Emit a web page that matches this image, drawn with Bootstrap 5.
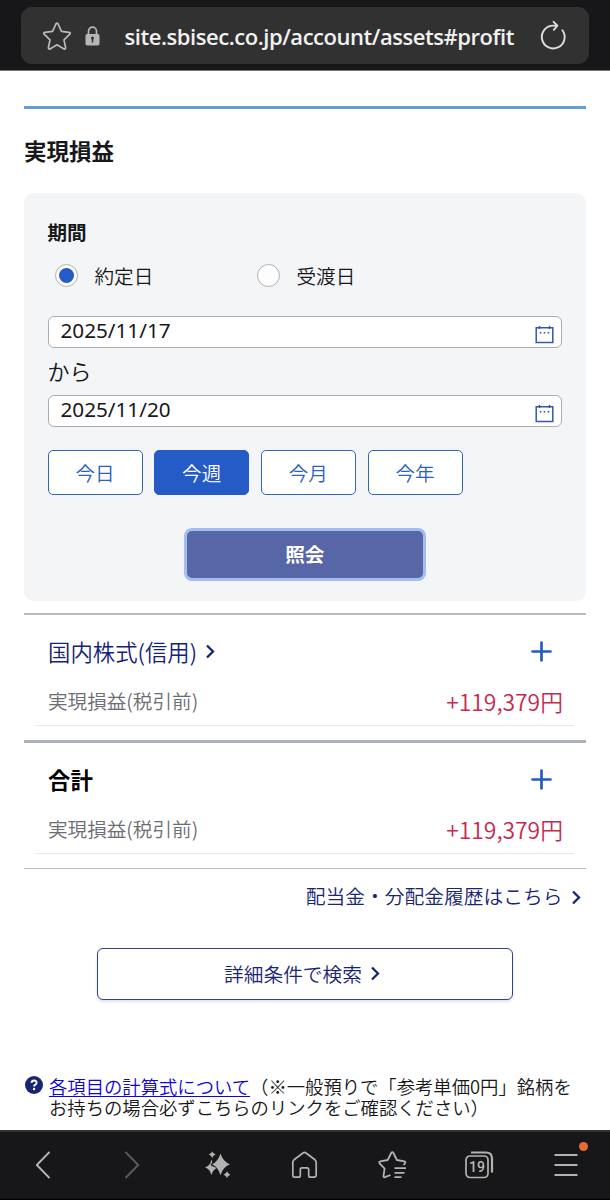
<!DOCTYPE html>
<html lang="ja">
<head>
<meta charset="utf-8">
<meta name="viewport" content="width=device-width, initial-scale=1">
<title>実現損益</title>
<link rel="stylesheet" href="https://cdn.jsdelivr.net/npm/bootstrap@5.3.0/dist/css/bootstrap.min.css">
<style>
body{width:610px;height:1200px;overflow:hidden;background:#fff;color:#17181a;font-family:"Noto Sans CJK JP",sans-serif;font-size:19.6px;font-weight:350;line-height:1}
svg{display:block;flex:none}
.topbar{height:71px;background:#17171a;border-bottom:1px solid #77777a;padding:7px 21px 6px}
.addr{height:57px;background:#313131;border-radius:11px;padding:0 21px 0 20px}
.lock{margin-left:12px}
.url{font:600 22px "Open Sans",sans-serif;letter-spacing:-.45px;color:#f1f1f1;white-space:nowrap;width:390px;margin-left:24.5px}
.page{height:1059px;padding:35px 24px 0}
.rule-top{height:3px;background:#5f9ed6}
.title{font-size:22.5px;font-weight:700;line-height:24px;height:24px;margin:29px 0 31px}
.panel{background:#f4f5f7;border-radius:10px;height:408px;padding:29px 24px 0 23.5px}
.lbl{font-weight:700;height:22px}
.radios{height:24px;margin-top:19px;padding-left:7px}
.dot{width:23px;height:23px;border:1px solid #aeb1b8;border-radius:50%;background:#fdfdfd;display:grid;place-items:center}
.dot.on::after{content:"";width:15px;height:15px;border-radius:50%;background:#255bc7}
.dot-text{margin-left:17px;padding-top:2px}
.field{height:32px;border:1px solid #a9adb6;border-radius:6px;background:#fff;padding:0 7px 0 12px}
.field span{font:20.7px/26px "Noto Sans",sans-serif}
.kara{font-size:22px;height:47px;padding-top:11px}
.quick{margin-top:23px;gap:11.7px}
.quick .btn{width:95px;height:44.5px;padding:2px 0 0;font-size:19.6px;font-weight:350;line-height:1;border:1.5px solid #3565bb;border-radius:5px;color:#2b5fc0;background:#fff}
.quick .btn.active{background:#255bc7;border-color:#255bc7;color:#fff}
.go{width:242px;height:53px;border:3px solid #a3bdf0;border-radius:8px;background:#5766a7;color:#fff;font-size:19.6px;font-weight:700;line-height:1;padding:0;margin-top:33px}
.sec{border-top:2px solid #b8bcc0;height:127px}
.sec.first{margin-top:12px}
.sec.thick{border-top:3px solid #aab0bc;height:128px}
.sec-head{height:77px;padding:0 34px 5px 24px;font-size:22.4px;color:#152377}
.sec-head span{padding-top:1px}
.sec-row{height:34px;margin:0 12px;padding:0 11px 15px 12px;border-bottom:1px solid #e6e8ea;color:#6b6d72}
.amt{color:#c32b50;font-size:22.85px;padding-top:1px}
.chev{margin-left:8px}
.navy{color:#182573}
.hist{border-top:1.5px solid #b4bcc2;height:79.5px;padding:17px 5.5px 0 0;font-size:19.75px}
.detail{width:416px;height:52px;border:1.5px solid #35437f;border-radius:6px;background:#fff;box-shadow:0 2px 3px #dfe3f1;font-size:19.7px;font-weight:350;line-height:1;color:#182573;padding:0 6px 0 0}
.note{margin-top:76px;font-size:18.33px;line-height:21px;white-space:nowrap;padding-left:1px}
.note a{color:#1005d6;text-decoration:underline;text-underline-offset:2px;text-decoration-thickness:1px}
.q{margin-right:6px}
.botbar{height:70px;background:#17171a;border-top:2px solid #333336;border-bottom:1px solid #000}
.botbar>div{flex:1;height:65px;display:grid;place-items:center}
.alert-dot{width:9px;height:9px;background:#e46b32;left:56.5px;top:10px}
</style>
<script src="https://cdn.jsdelivr.net/npm/bootstrap@5.3.0/dist/js/bootstrap.bundle.min.js"></script>
</head>
<body>
<header class="topbar">
  <div class="addr d-flex align-items-center">
    <svg width="32" height="32" viewBox="0 0 32 32" fill="none" stroke="#b9b9b9" stroke-width="1.7" stroke-linejoin="round"><path d="M15 3.8Q16 2.3 17 3.8L20.5 11.3L28.2 12.3Q30 12.8 28.8 14.2L23 19.8L24.6 27.6Q24.7 29.6 23 28.9L16 24.8L9 28.9Q7.3 29.6 7.4 27.6L9 19.8L3.2 14.2Q2 12.8 3.8 12.3L11.5 11.3Z"/></svg>
    <svg class="lock" width="15" height="20" viewBox="0 0 15 20"><path d="M3.5 9V5.2a4 4 0 0 1 8 0V9" fill="none" stroke="#b6b6b6" stroke-width="1.7"/><rect x=".5" y="8" width="14" height="11.5" rx="1.8" fill="#b6b6b6"/><circle cx="7.5" cy="12" r="1.5" fill="#313131"/><path d="M7.5 12v4.5" stroke="#313131" stroke-width="1.5"/></svg>
    <div class="url">site.sbisec.co.jp/account/assets#profit</div>
    <svg class="ms-auto" width="30" height="32" viewBox="0 0 30 32" fill="none" stroke="#dedede" stroke-width="1.9" stroke-linecap="round" stroke-linejoin="round"><path d="M24.4 10.2A11.4 11.4 0 1 1 15.5 5.6H18.8M15.6 1.8L19.4 5.7L15.8 9.8"/></svg>
  </div>
</header>
<main class="page">
  <div class="rule-top"></div>
  <h1 class="title">実現損益</h1>
  <section class="panel">
    <div class="lbl">期間</div>
    <div class="radios d-flex align-items-center">
      <span class="dot on"></span><span class="dot-text" style="width:162px">約定日</span>
      <span class="dot"></span><span class="dot-text">受渡日</span>
    </div>
    <div class="field d-flex justify-content-between" style="margin-top:29px"><span>2025/11/17</span>
      <svg class="mt-2" width="19" height="19" viewBox="0 0 19 19"><path d="M1.2 2.8H17.8V17.5H1.2ZM4.5 1V4M14.5 1V4" fill="none" stroke="#3159af" stroke-width="1.5"/><path d="M4.8 7.8H14.5" stroke="#3159af" stroke-width="1.6" stroke-dasharray="1.6 2.3"/></svg></div>
    <div class="kara">から</div>
    <div class="field d-flex justify-content-between"><span>2025/11/20</span>
      <svg class="mt-2" width="19" height="19" viewBox="0 0 19 19"><path d="M1.2 2.8H17.8V17.5H1.2ZM4.5 1V4M14.5 1V4" fill="none" stroke="#3159af" stroke-width="1.5"/><path d="M4.8 7.8H14.5" stroke="#3159af" stroke-width="1.6" stroke-dasharray="1.6 2.3"/></svg></div>
    <div class="quick d-flex">
      <button class="btn">今日</button><button class="btn active">今週</button><button class="btn">今月</button><button class="btn">今年</button>
    </div>
    <button class="btn go d-block mx-auto">照会</button>
  </section>
  <section class="sec first">
    <div class="sec-head d-flex align-items-center"><span>国内株式(信用)</span>
      <svg class="chev" width="10" height="15" viewBox="0 0 10 15"><path d="M2 1.5L8 7.5L2 13.5" fill="none" stroke="#152377" stroke-width="2.3"/></svg>
      <svg class="ms-auto" width="21" height="21" viewBox="0 0 21 21"><path d="M10.5 1.5V19.5M1.5 10.5H19.5" stroke="#255bbd" stroke-width="2.7" stroke-linecap="round"/></svg></div>
    <div class="sec-row d-flex align-items-center justify-content-between"><span>実現損益(税引前)</span><span class="amt">+119,379円</span></div>
  </section>
  <section class="sec thick">
    <div class="sec-head d-flex align-items-center"><span class="fw-bold text-black">合計</span>
      <svg class="ms-auto" width="21" height="21" viewBox="0 0 21 21"><path d="M10.5 1.5V19.5M1.5 10.5H19.5" stroke="#255bbd" stroke-width="2.7" stroke-linecap="round"/></svg></div>
    <div class="sec-row d-flex align-items-center justify-content-between"><span>実現損益(税引前)</span><span class="amt">+119,379円</span></div>
  </section>
  <div class="hist navy d-flex justify-content-end align-items-start"><span>配当金・分配金履歴はこちら</span>
    <svg class="chev mt-1" width="10" height="15" viewBox="0 0 10 15"><path d="M2 1.5L8 7.5L2 13.5" fill="none" stroke="#182573" stroke-width="2.3"/></svg></div>
  <button class="btn detail d-flex mx-auto justify-content-center align-items-center"><span>詳細条件で検索</span>
    <svg class="chev" width="10" height="15" viewBox="0 0 10 15"><path d="M2 1.5L8 7.5L2 13.5" fill="none" stroke="#182573" stroke-width="2.3"/></svg></button>
  <div class="note d-flex">
    <svg class="q" width="18" height="18" viewBox="0 0 18 18"><circle cx="9" cy="9" r="9" fill="#182573"/><path d="M6.5 6.8Q6.7 4.5 9.1 4.5Q11.7 4.6 11.6 6.8Q11.5 8 10 8.8Q9.1 9.3 9.1 10.4" fill="none" stroke="#fff" stroke-width="1.9"/><circle cx="9.1" cy="13" r="1.2" fill="#fff"/></svg>
    <div><a href="#">各項目の計算式について</a>（※一般預りで「参考単価0円」銘柄を<br>お持ちの場合必ずこちらのリンクをご確認ください）</div>
  </div>
</main>
<nav class="botbar d-flex" aria-label="ブラウザ">
  <div><svg width="16" height="28" viewBox="0 0 16 28"><path d="M13.5 1L.8 14L13.5 27" fill="none" stroke="#b5b5b5" stroke-width="1.8" stroke-linejoin="round"/></svg></div>
  <div><svg width="16" height="28" viewBox="0 0 16 28"><path d="M2.5 1L15.2 14L2.5 27" fill="none" stroke="#5c5c5e" stroke-width="1.8" stroke-linejoin="round"/></svg></div>
  <div><svg width="26" height="28" viewBox="0 0 26 28" fill="#b2b2b2"><path d="M15.5 2.5Q17.8 10.5 25 13.3Q17.8 16 15.5 24.2Q13.2 16 7 13.3Q13.2 10.5 15.5 2.5ZM7.2 .2Q8 2.8 10.6 3.6Q8 4.4 7.2 7Q6.4 4.4 3.8 3.6Q6.4 2.8 7.2 .2ZM22 20.3Q22.8 22.9 25.4 23.7Q22.8 24.5 22 27.1Q21.2 24.5 18.6 23.7Q21.2 22.9 22 20.3ZM7.2 8.5Q5 10 5.5 12Q4 15 0 16.2Q5 18 6.3 24Q8 19 11.5 17L6 14.5Q4.8 13.5 7 12Z"/></svg></div>
  <div><svg width="27" height="28" viewBox="0 0 27 28"><path d="M3.5 26.2H7.6Q9.3 26.2 9.3 24.5V18.5Q9.3 16.8 11 16.8H16Q17.7 16.8 17.7 18.5V24.5Q17.7 26.2 19.4 26.2H23Q25.2 26.2 25.2 24V11.5Q25.2 9.8 24 8.8L15 2Q13.5.9 12 2L3 8.8Q1.8 9.8 1.8 11.5V24Q1.8 26.2 3.5 26.2Z" fill="none" stroke="#b2b2b2" stroke-width="1.7" stroke-linejoin="round"/></svg></div>
  <div><svg width="29" height="29" viewBox="0 0 29 29"><path d="M12.5 25L7 27.2Q5.3 27.8 5.5 25.8L6.6 18.6L1.6 13.3Q.6 11.8 2.4 11.4L9.7 10L13.2 3Q14.3 1.3 15.4 3L18.9 10L26.4 11.3Q28 11.8 27 13.3L25.5 15M16.5 18.2H28M16.5 22.8H26.5M16.5 27.2H23.5" fill="none" stroke="#b2b2b2" stroke-width="1.8" stroke-linejoin="round"/></svg></div>
  <div><svg width="30" height="30" viewBox="0 0 30 30"><rect x="2" y="6" width="22" height="21.5" rx="4" fill="none" stroke="#b2b2b2" stroke-width="1.7"/><path d="M7 2.5H22Q28 2.5 28 8.5V22.5" fill="none" stroke="#b2b2b2" stroke-width="2.2"/><text x="13" y="22" text-anchor="middle" font-family="Roboto" font-weight="500" font-size="14" fill="#b8b8b8">19</text></svg></div>
  <div class="position-relative"><svg width="24" height="24" viewBox="0 0 24 24"><path d="M.5 2H23.5M.5 12H23.5M.5 22H23.5" stroke="#b2b2b2" stroke-width="1.9"/></svg><span class="alert-dot position-absolute rounded-circle"></span></div>
</nav>
</body>
</html>
